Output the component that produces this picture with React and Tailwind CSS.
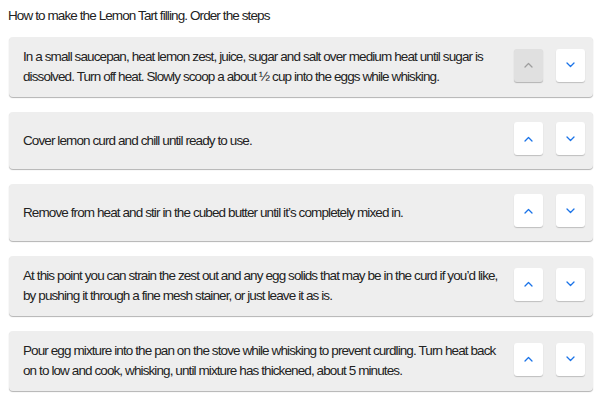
import React from "react";

const steps = [
  "In a small saucepan, heat lemon zest, juice, sugar and salt over medium heat until sugar is dissolved. Turn off heat. Slowly scoop a about ½ cup into the eggs while whisking.",
  "Cover lemon curd and chill until ready to use.",
  "Remove from heat and stir in the cubed butter until it’s completely mixed in.",
  "At this point you can strain the zest out and any egg solids that may be in the curd if you’d like, by pushing it through a fine mesh stainer, or just leave it as is.",
  "Pour egg mixture into the pan on the stove while whisking to prevent curdling. Turn heat back on to low and cook, whisking, until mixture has thickened, about 5 minutes.",
];

function Chevron({ up, color }) {
  return (
    <svg width="9" height="6" viewBox="0 0 9 6" fill="none">
      <polyline
        points={up ? "1,5 4.5,1.5 8,5" : "1,1 4.5,4.5 8,1"}
        stroke={color}
        strokeWidth="1.3"
        strokeLinecap="round"
        strokeLinejoin="round"
      />
    </svg>
  );
}

function Btn({ up, disabled }) {
  return (
    <div
      className={
        "w-[29px] h-[33px] rounded-[3px] flex items-center justify-center " +
        (disabled
          ? "bg-[#e0e0e0] shadow-[0_1px_1px_rgba(0,0,0,0.25)]"
          : "bg-white shadow-[0_1px_1px_rgba(0,0,0,0.2)]")
      }
    >
      <Chevron up={up} color={disabled ? "#9e9e9e" : "#1a73e8"} />
    </div>
  );
}

export default function App() {
  return (
    <div
      className="w-[600px] h-[400px] bg-white text-[13.5px] tracking-[-0.9px] text-[#222]"
      style={{ fontFamily: '"Liberation Sans", Arial, sans-serif' }}
    >
      <div className="pl-[8px] pt-[6px] leading-[20px]">
        How to make the Lemon Tart filling. Order the steps
      </div>
      <div className="ml-[9px] w-[584px] mt-[11px] flex flex-col gap-[15px]">
        {steps.map((s, i) => (
          <div
            key={i}
            className="bg-[#eeeeee] rounded-[4px] shadow-[0_1px_1px_rgba(0,0,0,0.3)] flex items-center py-[10px] pl-[14px] pr-[8px]"
          >
            <div className="flex-1 leading-[20px] pr-[10px]">{s}</div>
            <div className="flex gap-[13px] mb-[4px]">
              <Btn up disabled={i === 0} />
              <Btn />
            </div>
          </div>
        ))}
      </div>
    </div>
  );
}
